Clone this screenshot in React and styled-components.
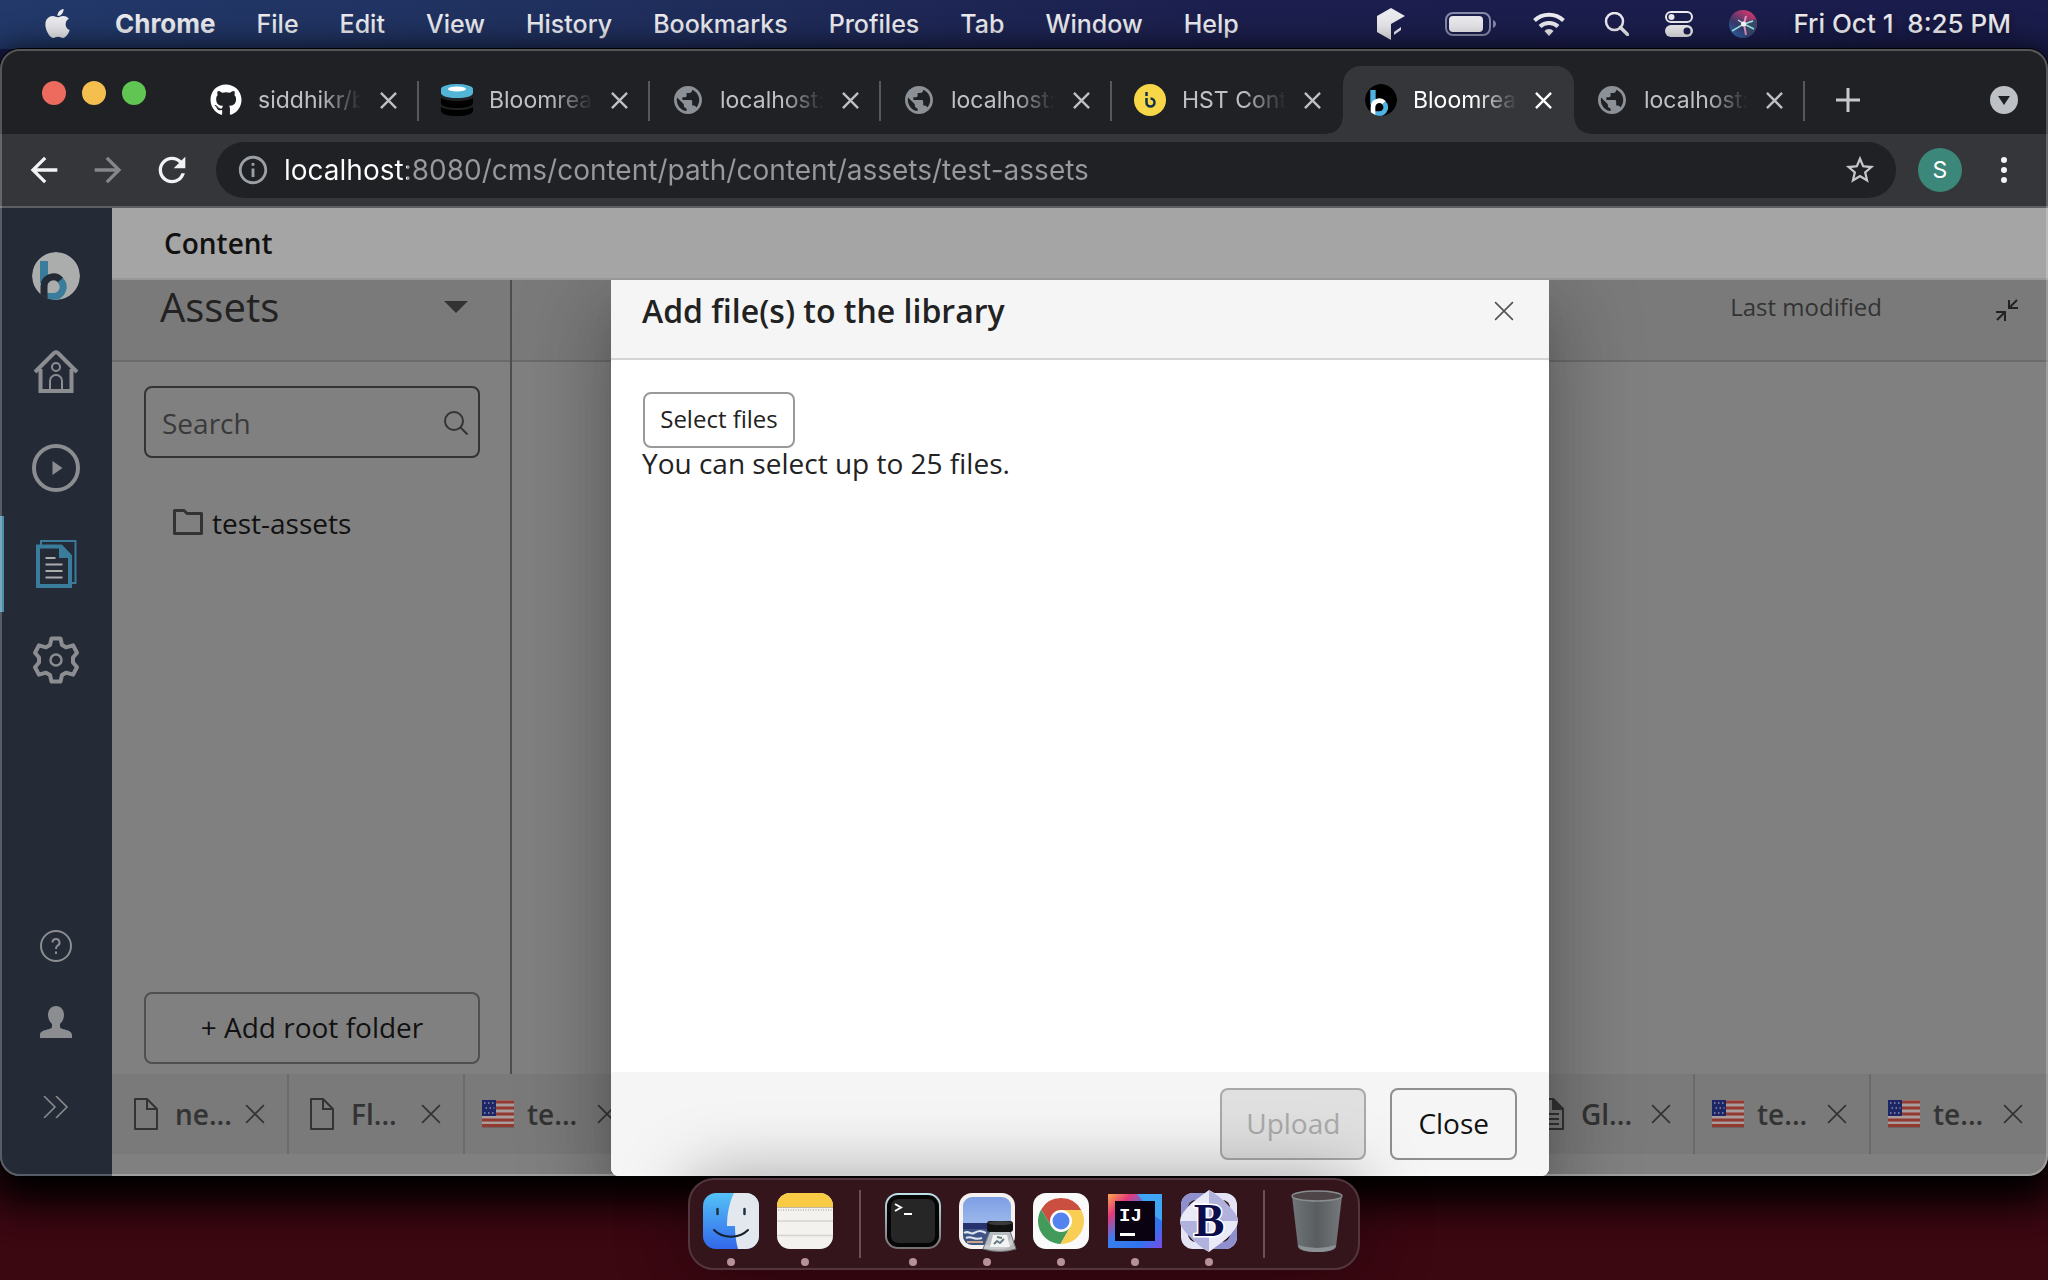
import React from "react";
import styled, { createGlobalStyle, css } from "styled-components";
import { FaApple, FaGithub } from "react-icons/fa";
import {
  MdArrowBack,
  MdArrowForward,
  MdRefresh,
  MdStarBorder,
  MdInfoOutline,
} from "react-icons/md";

const ui = `Inter, "Liberation Sans", sans-serif`;
const cms = `"Open Sans", "Noto Sans", sans-serif`;

const GlobalStyle = createGlobalStyle`
  *, *::before, *::after { box-sizing: border-box; }
  body { margin: 0; background: #12040a; overflow: hidden; }
  button, input { font: inherit; color: inherit; margin: 0; padding: 0; border: 0; background: none; outline: none; }
  button { cursor: pointer; }
  svg { display: block; flex: none; }
`;

const Desktop = styled.div`
  display: flex;
  flex-direction: column;
  height: 100vh;
  font-family: ${ui};
  background: linear-gradient(180deg, #1a1c4b 0, #1a1c4b 80px, #3b0711 90%, #3b0711 100%);
`;

/* ---------- macOS menu bar ---------- */

const MenuBar = styled.header`
  display: flex;
  align-items: center;
  justify-content: space-between;
  flex: none;
  height: 49px;
  padding: 0 37px 2px 41px;
  font-size: 25px;
  line-height: 44px;
  color: #ececf0;
  text-shadow: 0 2px 6px rgba(0, 0, 0, 0.4);
  background: linear-gradient(90deg, #22396a 0, #20305e 28%, #1c1f4d 60%, #1a1c4b 100%);
`;

const MenuGroup = styled.nav`
  display: flex;
  align-items: center;
  gap: 41px;
`;

const StatusGroup = styled.div`
  display: flex;
  align-items: center;
  gap: 36px;
`;

const MenuItem = styled.button`
  font-size: ${(p) => (p.$bold ? 26 : 25)}px;
  font-weight: ${(p) => (p.$bold ? 700 : 500)};
  white-space: nowrap;
`;

const Clock = styled.time`
  font-size: 26px;
  font-weight: 500;
  white-space: pre;
`;

/* ---------- Browser window ---------- */

const Window = styled.section`
  position: relative;
  display: flex;
  flex-direction: column;
  flex: 1;
  min-height: 0;
  border-radius: 20px;
  box-shadow: 0 0 0 1px #000, 0 16px 36px 12px #000;
  &::after {
    content: "";
    position: absolute;
    inset: 0;
    border: 2px solid rgba(255, 255, 255, 0.24);
    border-radius: 20px;
    pointer-events: none;
  }
`;

const TabStrip = styled.div`
  display: flex;
  align-items: stretch;
  flex: none;
  height: 85px;
  padding: 17px 30px 0 42px;
  background: #202124;
  border-radius: 20px 20px 0 0;
`;

const Lights = styled.div`
  display: flex;
  gap: 16px;
  width: 146px;
  padding-top: 15px;
  flex: none;
`;

const Light = styled.button`
  width: 24px;
  height: 24px;
  border-radius: 50%;
  background: ${(p) => p.$color};
`;

const BrowserTab = styled.div`
  position: relative;
  display: flex;
  align-items: center;
  flex: 0 1 231px;
  min-width: 0;
  padding: 0 19px 0 22px;
  font-size: 23px;
  color: #bdc1c6;
  &::after {
    content: "";
    position: absolute;
    right: 0;
    top: 15px;
    width: 2px;
    height: 40px;
    background: ${(p) => (p.$noRule ? "transparent" : "#56585c")};
  }
  ${(p) =>
    p.$active &&
    css`
      color: #fff;
      background: #35363a;
      border-radius: 18px 18px 0 0;
      &::before,
      &::after {
        content: "";
        position: absolute;
        top: auto;
        bottom: 0;
        width: 16px;
        height: 16px;
      }
      &::before {
        left: -16px;
        background: radial-gradient(circle at 0 0, transparent 15px, #35363a 16px);
      }
      &::after {
        right: -16px;
        background: radial-gradient(circle at 100% 0, transparent 15px, #35363a 16px);
      }
    `}
`;

const Favicon = styled.span`
  display: flex;
  align-items: center;
  justify-content: center;
  flex: none;
  width: 32px;
  height: 32px;
`;

const TabTitle = styled.button`
  flex: 1;
  min-width: 0;
  margin: 0 14px 0 16px;
  overflow: hidden;
  text-align: left;
  white-space: nowrap;
  line-height: 32px;
  mask-image: linear-gradient(90deg, #000 60%, transparent 100%);
`;

const IconButton = styled.button`
  display: flex;
  align-items: center;
  justify-content: center;
  flex: none;
  width: ${(p) => p.$size || 24}px;
  height: ${(p) => p.$size || 24}px;
  color: ${(p) => p.$color || "inherit"};
`;

const StripActions = styled.div`
  display: flex;
  align-items: center;
  justify-content: space-between;
  flex: 1;
  padding-left: 27px;
`;

const Toolbar = styled.div`
  display: flex;
  align-items: center;
  flex: none;
  height: 74px;
  padding: 0 24px;
  color: #f1f3f4;
  background: #35363a;
  border-bottom: 2px solid #5d5e62;
`;

const NavButtons = styled.div`
  display: flex;
  gap: 24px;
  margin-right: 24px;
`;

const Omnibox = styled.label`
  display: flex;
  align-items: center;
  flex: 1;
  height: 56px;
  padding: 0 19px 0 20px;
  border-radius: 28px;
  color: #9aa0a6;
  background: #202124;
`;

const UrlInput = styled.input`
  flex: 1;
  min-width: 0;
  margin-left: 14px;
  font-size: 28px;
  line-height: 40px;
  color: transparent;
  background: linear-gradient(90deg, #fff 123px, #96999d 123px);
  background-clip: text;
  -webkit-background-clip: text;
`;

const Avatar = styled.button`
  width: 44px;
  height: 44px;
  margin: 0 22px;
  border-radius: 50%;
  font-size: 23px;
  color: #fff;
  background: #3b8779;
`;

/* ---------- CMS page ---------- */

const Page = styled.div`
  display: flex;
  flex: 1;
  min-height: 0;
  overflow: hidden;
  border-radius: 0 0 20px 20px;
  font-family: ${cms};
  font-size: 28px;
  line-height: 40px;
  color: #111;
  background: #808080;
`;

const Sidebar = styled.nav`
  display: flex;
  flex-direction: column;
  flex: none;
  width: 112px;
  padding: 20px 0 22px;
  color: #8b8d91;
  background: #242a36;
`;

const SideItem = styled.button`
  display: flex;
  align-items: center;
  justify-content: center;
  height: ${(p) => p.$height || 96}px;
  border-left: 4px solid ${(p) => (p.$active ? "#4b8cab" : "transparent")};
  padding-right: 4px;
`;

const Spacer = styled.div`
  flex: 1;
`;

const Main = styled.main`
  display: flex;
  flex-direction: column;
  flex: 1;
  min-width: 0;
`;

const PageHeader = styled.header`
  flex: none;
  height: 72px;
  padding: 15px 52px;
  font-weight: 600;
  background: #a5a5a5;
  border-bottom: 2px solid #989898;
`;

const PageTitle = styled.h1`
  margin: 0;
  font: inherit;
`;

const Workspace = styled.div`
  position: relative;
  display: flex;
  flex-direction: column;
  flex: 1;
  min-height: 0;
  overflow: hidden;
`;

const Columns = styled.div`
  display: flex;
  flex: 1;
  min-height: 0;
`;

const TreePanel = styled.aside`
  display: flex;
  flex-direction: column;
  flex: none;
  width: 400px;
  border-right: 2px solid #4d4d4d;
`;

const PanelHeader = styled.div`
  display: flex;
  align-items: center;
  justify-content: ${(p) => (p.$end ? "flex-end" : "space-between")};
  flex: none;
  height: 82px;
  padding: 0 ${(p) => (p.$end ? 29 : 42)}px 26px 48px;
  color: #222;
  background: #7a7a7a;
  border-bottom: 2px solid #6b6b6b;
`;

const PanelTitle = styled.h2`
  margin: 0;
  font-size: 40px;
  line-height: 56px;
  font-weight: 400;
`;

const SearchBox = styled.label`
  display: flex;
  align-items: center;
  height: 72px;
  margin: 24px 30px 0 32px;
  padding: 2px 10px 0 16px;
  border: 2px solid #333;
  border-radius: 8px;
  color: #333;
`;

const SearchInput = styled.input`
  flex: 1;
  min-width: 0;
  &::placeholder {
    color: #3a3a3a;
    opacity: 1;
  }
`;

const TreeItem = styled.button`
  display: flex;
  align-items: center;
  gap: 9px;
  margin: 45px 0 0 61px;
`;

const AddFolder = styled.button`
  height: 72px;
  margin: auto 30px 10px 32px;
  padding-bottom: 2px;
  border: 2px solid #4f4f4f;
  border-radius: 8px;
`;

const ListPanel = styled.section`
  flex: 1;
  min-width: 0;
`;

const ColumnLabel = styled.span`
  margin-right: 113px;
  font-size: 24px;
  line-height: 56px;
  color: #333;
`;

const DocTabs = styled.div`
  display: flex;
  justify-content: space-between;
  flex: none;
  height: 80px;
  margin-bottom: 22px;
  padding: 0 1px;
  background: #7a7a7a;
`;

const DocGroup = styled.div`
  display: flex;
`;

const DocTab = styled.div`
  display: flex;
  align-items: center;
  width: 176px;
  padding: 0 20px 0 16px;
  border-right: 2px solid ${(p) => (p.$last ? "transparent" : "#6a6a6a")};
  font-weight: 600;
  color: #333;
`;

const DocIcon = styled.span`
  display: flex;
  justify-content: center;
  flex: none;
  width: 34px;
`;

const DocName = styled.button`
  flex: 1;
  margin-left: 12px;
  text-align: left;
`;

/* ---------- Dialog ---------- */

const Overlay = styled.div`
  position: absolute;
  inset: 0;
  display: flex;
  justify-content: center;
`;

const DialogBox = styled.div`
  display: flex;
  flex-direction: column;
  width: 938px;
  max-width: 90%;
  color: #222;
  background: #fff;
  border-radius: 0 0 8px 8px;
  overflow: hidden;
  box-shadow: 0 22px 30px -14px rgba(0, 0, 0, 0.2), 0 48px 76px 6px rgba(0, 0, 0, 0.14),
    0 18px 92px 16px rgba(0, 0, 0, 0.14);
`;

const DialogHeader = styled.div`
  display: flex;
  align-items: center;
  justify-content: space-between;
  flex: none;
  height: 80px;
  padding: 0 33px 16px 31px;
  background: #f5f5f5;
  border-bottom: 2px solid #d4d4d4;
`;

const DialogTitle = styled.h2`
  margin: 0;
  font-size: 32px;
  line-height: 44px;
  font-weight: 600;
`;

const DialogBody = styled.div`
  flex: 1;
  padding: 32px 31px;
`;

const DialogFooter = styled.div`
  display: flex;
  justify-content: flex-end;
  gap: 24px;
  flex: none;
  height: 104px;
  padding: 16px 32px;
  background: #f5f5f5;
`;

const SelectButton = styled.button`
  display: block;
  width: 152px;
  height: 56px;
  margin-left: 1px;
  padding-bottom: 2px;
  border: 2px solid #999;
  border-radius: 8px;
  font-size: 24px;
`;

const Hint = styled.p`
  margin: 0;
  line-height: 30px;
`;

const ActionButton = styled.button`
  height: 72px;
  padding: 0 26px 2px;
  border: 2px solid #8f8f8f;
  border-radius: 8px;
  color: #111;
  &:disabled {
    padding: 0 24px 2px;
    color: #a9a9a9;
    border-color: #a9a9a9;
    background: #e0e0e0;
  }
`;

/* ---------- Dock ---------- */

const DockArea = styled.footer`
  position: relative;
  display: flex;
  justify-content: center;
  align-items: flex-start;
  flex: none;
  height: 104px;
  padding-top: 2px;
`;

const Dock = styled.div`
  display: flex;
  height: 92px;
  padding: 0 4px;
  border: 2px solid #53363d;
  border-radius: 26px;
  background: #33151b;
  box-shadow: 0 0 70px rgba(0, 0, 0, 0.35);
`;

const DockItem = styled.button`
  display: flex;
  flex-direction: column;
  align-items: center;
  justify-content: flex-start;
  gap: 9px;
  width: 74px;
  padding-top: 13px;
  &::after {
    content: "";
    width: 8px;
    height: 8px;
    flex: none;
    border-radius: 50%;
    background: ${(p) => (p.$running ? "#b6909a" : "transparent")};
  }
`;

const DockRule = styled.span`
  width: 2px;
  height: 68px;
  margin: 10px 15px 0 17px;
  background: #6d5056;
`;

/* ---------- Drawings ---------- */

const Cross = ({ size = 17, width = 2.5 }) => (
  <svg width={size} height={size} viewBox="0 0 18 18" fill="none" stroke="currentColor" strokeWidth={width}>
    <path d="M1 1 17 17M17 1 1 17" />
  </svg>
);

const CubeIcon = () => (
  <svg width="32" height="32" viewBox="0 0 32 32" fill="currentColor">
    <path d="M14 0 28 8 14 16V32L0 24V8Z" />
    <path d="M17 24 24 19V22L17 27Z" />
  </svg>
);

const BatteryIcon = () => (
  <svg width="52" height="24" viewBox="0 0 52 24">
    <rect x="1" y="1" width="44" height="22" rx="7" fill="none" stroke="#898bab" strokeWidth="2" />
    <rect x="4" y="4" width="34" height="16" rx="4" fill="currentColor" />
    <path d="M48 8c4 2 4 6 0 8Z" fill="#898bab" />
  </svg>
);

const WifiIcon = () => (
  <svg width="32" height="24" viewBox="0 0 32 24" fill="none" stroke="currentColor" strokeWidth="4">
    <path d="M1.500 8.500a21 21 0 0 1 29 0M7 14.500a13 13 0 0 1 18 0" />
    <path d="M16 24 11.500 19a6 6 0 0 1 9 0Z" fill="currentColor" stroke="none" />
  </svg>
);

const MenuSearchIcon = () => (
  <svg width="28" height="24" viewBox="0 0 28 24" fill="none" stroke="currentColor" strokeWidth="2.500">
    <circle cx="13.500" cy="9.500" r="8.500" />
    <path d="m19.500 15.500 7 7" strokeWidth="3.500" strokeLinecap="round" />
  </svg>
);

const ControlIcon = () => (
  <svg width="28" height="26" viewBox="0 0 28 26" fill="none" stroke="currentColor" strokeWidth="2">
    <rect x="1" y="1" width="26" height="10" rx="5" />
    <circle cx="6.500" cy="6" r="3" fill="currentColor" stroke="none" />
    <rect x="0" y="14" width="28" height="12" rx="6" fill="currentColor" stroke="none" />
    <circle cx="22" cy="20" r="3.500" fill="#1c1f4d" stroke="none" />
  </svg>
);

const SiriIcon = () => (
  <svg width="28" height="28" viewBox="0 0 28 28">
    <defs>
      <linearGradient id="siri" x1="0" y1="1" x2="0.6" y2="0">
        <stop offset="0" stopColor="#2f78c8" />
        <stop offset="0.5" stopColor="#3a3a6c" />
        <stop offset="1" stopColor="#c8386f" />
      </linearGradient>
    </defs>
    <circle cx="14" cy="14" r="14" fill="url(#siri)" />
    <path d="M14 14 27 9a14 14 0 0 1-9 18Z" fill="#3b4c70" />
    <path d="M3 21 15 14 9 10M15 14l9-3M15 14l10 5" stroke="#9ff0e6" strokeWidth="1.500" fill="none" />
    <path d="M15 14 17 25M15 14l2-8" stroke="#e79ac8" strokeWidth="2" fill="none" />
    <circle cx="14.500" cy="14" r="2.500" fill="#fff" />
  </svg>
);

const GlobeIcon = () => (
  <svg width="28" height="28" viewBox="2 2 20 20" fill="#8b9196">
    <path d="M12 2C6.480 2 2 6.480 2 12s4.480 10 10 10 10-4.480 10-10S17.520 2 12 2zm-1 17.930c-3.950-.49-7-3.850-7-7.930 0-.62.08-1.210.21-1.790L9 15v1c0 1.100.9 2 2 2v1.930zm6.900-2.540c-.26-.81-1-1.390-1.900-1.390h-1v-3c0-.55-.45-1-1-1H8v-2h2c.55 0 1-.45 1-1V7h2c1.100 0 2-.9 2-2v-.41c2.930 1.190 5 4.060 5 7.410 0 2.080-.8 3.970-2.100 5.390z" />
  </svg>
);

const StackIcon = () => (
  <svg width="32" height="32" viewBox="0 0 32 32">
    <path d="M0 23v4c0 3 7 5 16 5s16-2 16-5v-4c-3 2-9 3-16 3S3 25 0 23Z" />
    <path d="M0 14v5c0 3 7 5 16 5s16-2 16-5v-5c-3 2-9 3-16 3S3 16 0 14Z" />
    <path d="M0 5v4c0 3 7 5 16 5s16-2 16-5V5Z" fill="#52b5d8" />
    <ellipse cx="16" cy="5" rx="16" ry="5" fill="#52b5d8" />
    <ellipse cx="16" cy="5" rx="9" ry="2.500" fill="#fff" />
  </svg>
);

const YellowIcon = () => (
  <svg width="32" height="32" viewBox="0 0 32 32" fill="none" stroke="#12304a" strokeWidth="2.500">
    <circle cx="16" cy="16" r="16" fill="#f7d748" stroke="none" />
    <path d="M12.500 8v4M12.500 14v4.500a4 4 0 1 0 4-4" />
  </svg>
);

const BloomLogo = ({ size, disc, stem, ring, bowl, clip }) => (
  <svg width={size} height={size} viewBox="0 0 48 48" fill="none">
    <clipPath id={clip}>
      <circle cx="24" cy="24" r="24" />
    </clipPath>
    <g clipPath={`url(#${clip})`}>
      <circle cx="24" cy="24" r="24" fill={disc} />
      <path d="M8 9h8v22H8Z" fill={stem} />
      <path d="M28 28a9.500 9.500 0 0 1-6.500 16.500H15" stroke={bowl} strokeWidth="7" />
      <path d="M12 48V34.500A9.500 9.500 0 0 1 28.500 28" stroke={ring} strokeWidth="7" />
    </g>
  </svg>
);

const HomeIcon = () => (
  <svg width="46" height="44" viewBox="0 0 46 44" fill="none" stroke="currentColor">
    <path d="M2 22 21 3Q23 1.500 25 3L44 22" strokeWidth="4" />
    <path d="M7.500 19V41H38.500V19" strokeWidth="4" />
    <circle cx="23" cy="17" r="4" strokeWidth="2" />
    <path d="M17 42V31a6 6 0 0 1 12 0V42" strokeWidth="2" />
  </svg>
);

const PlayIcon = () => (
  <svg width="48" height="48" viewBox="0 0 48 48">
    <circle cx="24" cy="24" r="22" fill="none" stroke="currentColor" strokeWidth="4" />
    <path d="M20.500 17 30.500 24 20.500 31Z" fill="currentColor" />
  </svg>
);

const DocsIcon = () => (
  <svg width="41" height="48" viewBox="0 0 41 48" fill="none" stroke="#397c9c">
    <path d="M5 5V1H39.500V43H36" strokeWidth="2" />
    <path d="M2 6.500H25L34 16V46H2Z" strokeWidth="4" />
    <path d="M23 5 36 18H23Z" fill="#397c9c" stroke="none" />
    <path d="M9.500 18h10M9.500 24.500h17M9.500 31h17M9.500 37.500h17" stroke="#abadad" strokeWidth="2" />
  </svg>
);

const GearIcon = () => (
  <svg width="48" height="48" viewBox="0 0 48 48" fill="none" stroke="currentColor">
    <path
      d="M19.500 2.500h9l1.500 6.500 4 2.300 7-2 4 7.500-4 4.700v5l4 4.700-4 7.500-7-2-4 2.300-1.500 6.500h-9L18 39l-4-2.300-7 2-4-7.500 4-4.700v-5l-4-4.700 4-7.500 7 2L18 9Z"
      strokeWidth="4"
      strokeLinejoin="round"
    />
    <circle cx="24" cy="24" r="5.500" strokeWidth="2.500" />
  </svg>
);

const HelpIcon = () => (
  <svg width="32" height="32" viewBox="0 0 32 32" fill="none" stroke="currentColor" strokeWidth="2">
    <circle cx="16" cy="16" r="15" />
    <path d="M12.500 12.500a3.500 3.500 0 1 1 5 3.200c-1 .6-1.500 1.300-1.500 3.300M16 21.500v2.500" />
  </svg>
);

const UserIcon = () => (
  <svg width="32" height="32" viewBox="0 0 32 32" fill="currentColor">
    <path d="M16 0c5 0 8 4 8 9 0 4-2 7-4 9v3c0 3 12 2 12 8v3H0v-3c0-6 12-5 12-8v-3c-2-2-4-5-4-9 0-5 3-9 8-9Z" />
  </svg>
);

const ChevronsIcon = () => (
  <svg width="26" height="22" viewBox="0 0 26 22" fill="none" stroke="currentColor" strokeWidth="1.500">
    <path d="m1 0 11 11L1 22M13 0l11 11-11 11" />
  </svg>
);

const SearchIcon = () => (
  <svg width="24" height="24" viewBox="0 0 24 24" fill="none" stroke="currentColor" strokeWidth="2">
    <circle cx="10" cy="10" r="9" />
    <path d="m16.500 16.500 7 7" />
  </svg>
);

const FolderIcon = () => (
  <svg width="30" height="28" viewBox="0 0 30 28" fill="none" stroke="#333" strokeWidth="3">
    <path d="M1.500 1.500h9.500l3 3h14.500v20h-27Z" strokeLinejoin="round" />
  </svg>
);

const ShrinkIcon = () => (
  <svg width="22" height="28" viewBox="0 -6 22 28" fill="none" stroke="#222" strokeWidth="2">
    <path d="M21 1 13 9M13 1V9H22M1 21 9 13M0 13H9V22" />
  </svg>
);

const PageIcon = ({ lines }) => (
  <svg width="24" height="32" viewBox="0 0 24 32" fill="none" stroke="#333" strokeWidth="2">
    <path d="M1 1h12l10 10v20H1Z" strokeLinejoin="round" />
    {lines ? <path d="M13 1v10h10ZM5 16h14M5 21h14M5 26h14" fill="#333" /> : <path d="M13 1v10h10" />}
  </svg>
);

const FlagIcon = () => (
  <svg width="32" height="28" viewBox="0 0 32 28">
    <rect width="32" height="27" fill="#a99c9c" />
    <path d="M0 2h32M0 8h32M0 14h32M0 20h32M0 25.500h32" stroke="#93392f" strokeWidth="3" />
    <path d="M0 27.500h32" stroke="#6e6464" />
    <rect width="14" height="16" fill="#1c2664" />
    <path d="M2 3h11M3.500 8h9M2 13h11" stroke="#8d90ad" strokeWidth="1.500" strokeDasharray="1.500 2.500" />
  </svg>
);

const FinderIcon = () => (
  <svg width="56" height="56" viewBox="0 0 56 56">
    <defs>
      <linearGradient id="finder" x1="0" y1="0" x2="0" y2="1">
        <stop offset="0" stopColor="#54c2f8" />
        <stop offset="1" stopColor="#3267ea" />
      </linearGradient>
      <clipPath id="finderClip">
        <rect width="56" height="56" rx="13" />
      </clipPath>
    </defs>
    <g clipPath="url(#finderClip)">
      <rect width="56" height="56" fill="url(#finder)" />
      <path d="M31 0c-5 10-7 22-7 33h8c0 9 1 16 3 23h21V0Z" fill="#e3e7ee" />
      <path d="M14.500 16v5M41.500 16v5" stroke="#20303f" strokeWidth="2.500" strokeLinecap="round" />
      <path d="M11 37c9 9 25 9 34 0" fill="none" stroke="#15202c" strokeWidth="2" strokeLinecap="round" />
    </g>
  </svg>
);

const NotesIcon = () => (
  <svg width="56" height="56" viewBox="0 0 56 56">
    <clipPath id="notesClip">
      <rect width="56" height="56" rx="13" />
    </clipPath>
    <g clipPath="url(#notesClip)">
      <rect width="56" height="56" fill="#f3f2ef" />
      <rect width="56" height="14" fill="#f9cb45" />
      <path d="M0 14.500h56" stroke="#c1b9a5" />
      <path d="M1 17h54" stroke="#bdbbb6" strokeWidth="1.500" strokeDasharray="1 1.500" />
      <path d="M0 28h56M0 42.500h56" stroke="#d6d4d0" strokeWidth="1.500" />
    </g>
  </svg>
);

const TerminalIcon = () => (
  <svg width="56" height="56" viewBox="0 0 56 56">
    <defs>
      <linearGradient id="termEdge" x1="0" y1="0" x2="0" y2="1">
        <stop offset="0" stopColor="#bfe2ec" />
        <stop offset="1" stopColor="#77706f" />
      </linearGradient>
    </defs>
    <rect width="56" height="56" rx="13" fill="url(#termEdge)" />
    <rect x="2" y="2" width="52" height="52" rx="11" fill="#050505" />
    <rect x="6" y="6" width="44" height="44" rx="7" fill="#262627" />
    <path d="m10 11 6 3.500-6 3.500M19 21h8" fill="none" stroke="#fff" strokeWidth="2" />
  </svg>
);

const PreviewIcon = () => (
  <svg width="56" height="56" viewBox="0 0 56 56" overflow="visible">
    <defs>
      <linearGradient id="sky" x1="0" y1="0" x2="0" y2="1">
        <stop offset="0" stopColor="#7e9fe4" />
        <stop offset="1" stopColor="#b3cbf1" />
      </linearGradient>
    </defs>
    <rect width="56" height="56" rx="13" fill="#f4f1ef" />
    <rect x="4" y="4" width="48" height="48" rx="9" fill="url(#sky)" />
    <path d="M4 30h48v8H4Z" fill="#28336e" />
    <path d="M4 36h48v7a9 9 0 0 1-9 9H13a9 9 0 0 1-9-9Z" fill="#3f5484" />
    <path d="M5 40c5-3 6 2 10 0s6-3 12 0M7 45c6-3 8 3 16 0" fill="none" stroke="#dfe6ee" strokeWidth="2" />
    <path d="M8 49h16" stroke="#c8a684" strokeWidth="2" />
    <path d="M31 38h20l6 18q-16 5-33 0Z" fill="#c4c8ca" fillOpacity="0.9" stroke="#6d7072" />
    <path d="M34 42h14l3 12H31Z" fill="#f2f3f3" />
    <path d="m35 51 3-3 3 2 4-4M38 44l5 1" stroke="#6b7c86" strokeWidth="2" fill="none" />
    <rect x="28" y="28" width="26" height="11" rx="3" fill="#111" />
    <ellipse cx="41" cy="30" rx="12" ry="2" fill="#3a3a3a" />
  </svg>
);

const ChromeIcon = () => (
  <svg width="56" height="56" viewBox="0 0 56 56">
    <rect width="56" height="56" rx="13" fill="#fafafa" />
    <g transform="translate(28 28)">
      <circle r="23" fill="#fff" />
      <path d="M0-11H20.200A23 23 0 0 0-19.900-11.500L-9.500 5.500Z" fill="#cb4f41" />
      <path d="M-9.500 5.500-19.900-11.500A23 23 0 0 0-.5 23L9.500 5.500 0 9Z" fill="#429a5b" />
      <path d="M9.500 5.500-.5 23A23 23 0 0 0 20.200-11H0Z" fill="#f8cf54" />
      <circle r="11" fill="#fff" />
      <circle r="8.500" fill="#5283ee" />
    </g>
  </svg>
);

const IdeaIcon = () => (
  <svg width="56" height="56" viewBox="0 0 56 56">
    <defs>
      <linearGradient id="idea" x1="0" y1="0" x2="1" y2="1">
        <stop offset="0" stopColor="#fca94a" />
        <stop offset="0.22" stopColor="#e3397c" />
        <stop offset="0.45" stopColor="#3a7df0" />
        <stop offset="0.75" stopColor="#2f74ee" />
        <stop offset="1" stopColor="#7a4be8" />
      </linearGradient>
    </defs>
    <rect x="1" y="1" width="54" height="54" fill="url(#idea)" />
    <path d="M30 1h25v27l-7-5V8H36Z" fill="#3fa6f5" />
    <rect x="8" y="8" width="40" height="40" fill="#0a0210" />
    <text x="12" y="28" fontFamily="Liberation Mono, monospace" fontWeight="700" fontSize="19" fill="#fff">
      IJ
    </text>
    <rect x="13" y="40" width="15" height="3" fill="#fff" />
  </svg>
);

const BIcon = () => (
  <svg width="56" height="56" viewBox="0 0 56 56" overflow="visible">
    <rect x="0" y="0" width="56" height="56" rx="12" fill="#e4e4f6" />
    <path d="M28 0H12A12 12 0 0 0 0 12V28H28ZM28 56H44A12 12 0 0 0 56 44V28H28Z" fill="#8f8fce" />
    <rect x="7" y="7" width="42" height="42" rx="8" fill="#2c1418" />
    <path d="M28-3Q38 2 44 9T54 20Q60 28 54 36T44 47 28 59Q18 54 12 47T2 36Q-4 28 2 20T12 9 28-3Z" fill="#e9e9f8" />
    <path d="M28-3V28H57Q57 24 54 20T44 9 28-3ZM28 59V28H-1Q-1 32 2 36T12 47 28 59Z" fill="#b1b1dd" />
    <text
      x="28"
      y="43"
      textAnchor="middle"
      fontFamily="Liberation Serif, serif"
      fontWeight="700"
      fontSize="46"
      fill="#0c0b4c"
      stroke="#fff"
      strokeWidth="3"
      paintOrder="stroke"
    >
      B
    </text>
  </svg>
);

const TrashIcon = () => (
  <svg width="56" height="60" viewBox="0 0 56 60" overflow="visible">
    <defs>
      <linearGradient id="trash" x1="0" y1="0" x2="1" y2="0">
        <stop offset="0" stopColor="#6f7578" />
        <stop offset="0.5" stopColor="#595d60" />
        <stop offset="1" stopColor="#74797c" />
      </linearGradient>
    </defs>
    <path d="M3 3 9 54q2 5 19 5t19-5L53 3Z" fill="url(#trash)" />
    <path d="M9 52q19 6 38 0-1 7-19 7T9 52Z" fill="#8b9194" />
    <ellipse cx="28" cy="3" rx="25" ry="5" fill="#4d4547" stroke="#888d90" strokeWidth="1.500" />
  </svg>
);

/* ---------- Data ---------- */

const menus = ["File", "Edit", "View", "History", "Bookmarks", "Profiles", "Tab", "Window", "Help"];

const tabs = [
  { title: "siddhikr/b", icon: <FaGithub size={32} color="#fff" /> },
  { title: "Bloomrea", icon: <StackIcon /> },
  { title: "localhost:", icon: <GlobeIcon /> },
  { title: "localhost:", icon: <GlobeIcon /> },
  { title: "HST Cont", icon: <YellowIcon />, noRule: true },
  {
    title: "Bloomrea",
    active: true,
    icon: <BloomLogo size={32} disc="#000" stem="#4fb3e2" ring="#fff" bowl="#4fb3e2" clip="tabLogo" />,
  },
  { title: "localhost:", icon: <GlobeIcon /> },
];

const leftDocs = [
  { name: "ne...", icon: <PageIcon /> },
  { name: "Fl...", icon: <PageIcon /> },
  { name: "te...", icon: <FlagIcon /> },
];

const rightDocs = [
  { name: "Gl...", icon: <PageIcon lines /> },
  { name: "te...", icon: <FlagIcon /> },
  { name: "te...", icon: <FlagIcon />, last: true },
];

const DocTabGroup = ({ docs }) => (
  <DocGroup>
    {docs.map((d, i) => (
      <DocTab key={i} $last={d.last}>
        <DocIcon>{d.icon}</DocIcon>
        <DocName>{d.name}</DocName>
        <IconButton>
          <Cross size={20} width={1.5} />
        </IconButton>
      </DocTab>
    ))}
  </DocGroup>
);

export default function App() {
  return (
    <Desktop>
      <GlobalStyle />
      <MenuBar>
        <MenuGroup>
          <MenuItem aria-label="Apple menu">
            <FaApple size={33} />
          </MenuItem>
          <MenuItem $bold>Chrome</MenuItem>
          {menus.map((m) => (
            <MenuItem key={m}>{m}</MenuItem>
          ))}
        </MenuGroup>
        <StatusGroup>
          <CubeIcon />
          <BatteryIcon />
          <WifiIcon />
          <MenuSearchIcon />
          <ControlIcon />
          <SiriIcon />
          <Clock>Fri Oct 1  8:25 PM</Clock>
        </StatusGroup>
      </MenuBar>

      <Window>
        <TabStrip>
          <Lights>
            <Light $color="#ed6a5e" />
            <Light $color="#f5bf4f" />
            <Light $color="#61c554" />
          </Lights>
          {tabs.map((t, i) => (
            <BrowserTab key={i} $active={t.active} $noRule={t.noRule}>
              <Favicon>{t.icon}</Favicon>
              <TabTitle>{t.title}</TabTitle>
              <IconButton>
                <Cross />
              </IconButton>
            </BrowserTab>
          ))}
          <StripActions>
            <IconButton $size={32} $color="#c6c9cc">
              <svg width="24" height="24" viewBox="0 0 24 24" stroke="currentColor" strokeWidth="3">
                <path d="M12 0V24M0 12H24" />
              </svg>
            </IconButton>
            <IconButton $size={28}>
              <svg width="28" height="28" viewBox="0 0 28 28">
                <circle cx="14" cy="14" r="14" fill="#bdc1c6" />
                <path d="M8 10h12l-6 9Z" fill="#202124" />
              </svg>
            </IconButton>
          </StripActions>
        </TabStrip>

        <Toolbar>
          <NavButtons>
            <IconButton $size={40}>
              <MdArrowBack size={40} />
            </IconButton>
            <IconButton $size={40} $color="#85878a">
              <MdArrowForward size={40} />
            </IconButton>
            <IconButton $size={40}>
              <MdRefresh size={40} />
            </IconButton>
          </NavButtons>
          <Omnibox>
            <MdInfoOutline size={34} />
            <UrlInput
              aria-label="Address"
              defaultValue="localhost:8080/cms/content/path/content/assets/test-assets"
            />
            <IconButton $size={34} $color="#c3c6ca">
              <MdStarBorder size={34} />
            </IconButton>
          </Omnibox>
          <Avatar>S</Avatar>
          <IconButton $size={40}>
            <svg width="6" height="26" viewBox="0 0 6 26" fill="currentColor">
              <circle cx="3" cy="3" r="3" />
              <circle cx="3" cy="13" r="3" />
              <circle cx="3" cy="23" r="3" />
            </svg>
          </IconButton>
        </Toolbar>

        <Page>
          <Sidebar>
            <SideItem>
              <BloomLogo size={48} disc="#abadad" stem="#397c9c" ring="#242a36" bowl="#397c9c" clip="sideLogo" />
            </SideItem>
            <SideItem>
              <HomeIcon />
            </SideItem>
            <SideItem>
              <PlayIcon />
            </SideItem>
            <SideItem $active>
              <DocsIcon />
            </SideItem>
            <SideItem>
              <GearIcon />
            </SideItem>
            <Spacer />
            <SideItem $height={76}>
              <HelpIcon />
            </SideItem>
            <SideItem $height={76}>
              <UserIcon />
            </SideItem>
            <SideItem $height={94}>
              <ChevronsIcon />
            </SideItem>
          </Sidebar>

          <Main>
            <PageHeader>
              <PageTitle>Content</PageTitle>
            </PageHeader>
            <Workspace>
              <Columns>
                <TreePanel>
                  <PanelHeader>
                    <PanelTitle>Assets</PanelTitle>
                    <IconButton>
                      <svg width="24" height="12" viewBox="0 0 24 12" fill="#333">
                        <path d="M0 0h24L12 12Z" />
                      </svg>
                    </IconButton>
                  </PanelHeader>
                  <SearchBox>
                    <SearchInput placeholder="Search" />
                    <SearchIcon />
                  </SearchBox>
                  <TreeItem>
                    <FolderIcon />
                    test-assets
                  </TreeItem>
                  <AddFolder>+ Add root folder</AddFolder>
                </TreePanel>
                <ListPanel>
                  <PanelHeader $end>
                    <ColumnLabel>Last modified</ColumnLabel>
                    <IconButton>
                      <ShrinkIcon />
                    </IconButton>
                  </PanelHeader>
                </ListPanel>
              </Columns>
              <DocTabs>
                <DocTabGroup docs={leftDocs} />
                <DocTabGroup docs={rightDocs} />
              </DocTabs>

              <Overlay>
                <DialogBox role="dialog" aria-labelledby="dialog-title">
                  <DialogHeader>
                    <DialogTitle id="dialog-title">Add file(s) to the library</DialogTitle>
                    <IconButton $color="#555">
                      <Cross size={20} width={1.5} />
                    </IconButton>
                  </DialogHeader>
                  <DialogBody>
                    <SelectButton>Select files</SelectButton>
                    <Hint>You can select up to 25 files.</Hint>
                  </DialogBody>
                  <DialogFooter>
                    <ActionButton disabled>Upload</ActionButton>
                    <ActionButton>Close</ActionButton>
                  </DialogFooter>
                </DialogBox>
              </Overlay>
            </Workspace>
          </Main>
        </Page>
      </Window>

      <DockArea>
        <Dock>
          <DockItem $running>
            <FinderIcon />
          </DockItem>
          <DockItem $running>
            <NotesIcon />
          </DockItem>
          <DockRule />
          <DockItem $running>
            <TerminalIcon />
          </DockItem>
          <DockItem $running>
            <PreviewIcon />
          </DockItem>
          <DockItem $running>
            <ChromeIcon />
          </DockItem>
          <DockItem $running>
            <IdeaIcon />
          </DockItem>
          <DockItem $running>
            <BIcon />
          </DockItem>
          <DockRule />
          <DockItem>
            <TrashIcon />
          </DockItem>
        </Dock>
      </DockArea>
    </Desktop>
  );
}
